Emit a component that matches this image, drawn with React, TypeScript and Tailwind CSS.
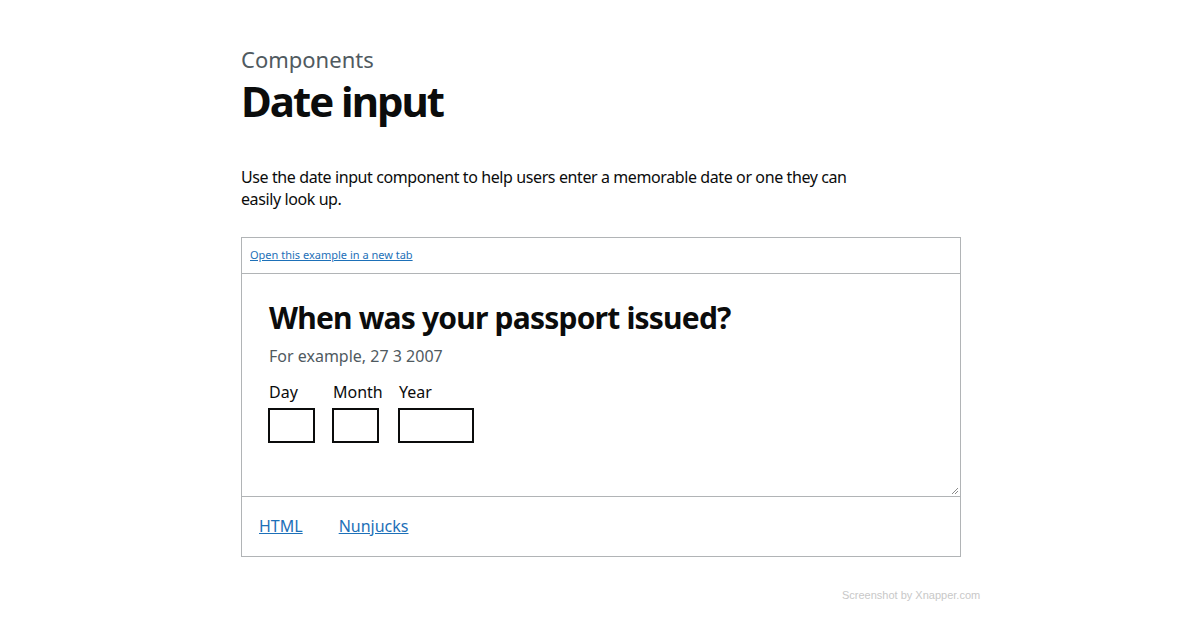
export default function App() {
  const font = { fontFamily: '"Noto Sans", Arial, sans-serif' };
  const fields = [
    { label: 'Day', width: 'w-[47px]', gap: 'mr-[17px]' },
    { label: 'Month', width: 'w-[47px]', gap: 'mr-[19px]' },
    { label: 'Year', width: 'w-[76px]', gap: '' },
  ];
  return (
    <div className="relative h-[627px] w-[1200px] bg-white" style={font}>
      <div className="ml-[241px] w-[720px] pt-[46px]">
        <p className="text-[22px] leading-[26px] text-[#505a5f]">Components</p>
        <h1 className="mt-[6px] text-[42px] font-bold leading-[46px] tracking-[-2px] text-[#0b0c0c]">Date input</h1>

        <p className="mt-[42px] w-[620px] text-[16px] leading-[22px] tracking-[-0.4px] text-[#0b0c0c]">
          Use the date input component to help users enter a memorable date or one they can easily look up.
        </p>

        <div className="mt-[27px] border border-[#b1b4b6]">
          <div className="flex h-[36px] items-center border-b border-[#b1b4b6] px-[8px]">
            <a href="#" className="text-[11px] text-[#1d70b8] underline">Open this example in a new tab</a>
          </div>
          <div className="relative h-[223px] border-b border-[#b1b4b6] px-[26px] pt-[24px]">
            <h2 className="ml-[1px] text-[30px] font-bold leading-[40px] tracking-[-0.8px] text-[#0b0c0c]">When was your passport issued?</h2>
            <p className="ml-[1px] mt-[6px] text-[16px] leading-[24px] text-[#505a5f]">For example, 27 3 2007</p>
            <div className="mt-[12px] flex">
              {fields.map((f) => (
                <div key={f.label} className={`flex flex-col ${f.width} ${f.gap}`}>
                  <span className="ml-[1px] whitespace-nowrap text-[16px] leading-[24px] text-[#0b0c0c]">{f.label}</span>
                  <div className={`mt-[4px] h-[35px] ${f.width} border-2 border-[#0b0c0c]`} />
                </div>
              ))}
            </div>
            <svg className="absolute bottom-[1px] right-[1px]" width="8" height="8" viewBox="0 0 8 8">
              <path d="M7 1 L1 7 M7 4 L4 7" stroke="#8a8a8a" strokeWidth="1" />
            </svg>
          </div>
          <div className="flex h-[59px] items-center gap-[36px] px-[17px] pb-[2px]">
            <a href="#" className="text-[16px] text-[#1d70b8] underline">HTML</a>
            <a href="#" className="text-[16px] text-[#1d70b8] underline">Nunjucks</a>
          </div>
        </div>
      </div>
      <span className="absolute left-[842px] top-[587px] text-[11px] text-[#c8c8c8]" style={{ fontFamily: '"Liberation Sans", Arial, sans-serif' }}>
        Screenshot by Xnapper.com
      </span>
    </div>
  );
}
